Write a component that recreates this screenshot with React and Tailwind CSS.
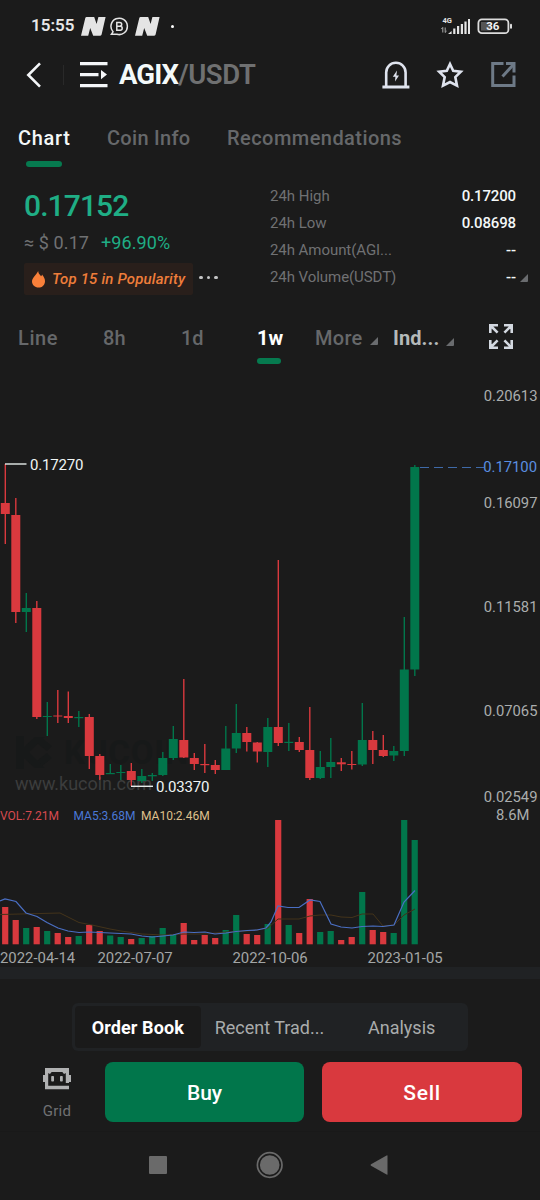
import { clsx } from "clsx";

const UP = "#01764b";
const DOWN = "#d9393e";

// [up, high, bodyTop, bodyBottom, low, volumeTop]
const candles = [
  [0, 464, 503, 514, 544, 907],
  [0, 498, 515, 612, 623, 920],
  [1, 593, 608, 612, 632, 928],
  [0, 601, 608, 717, 719, 927],
  [1, 702, 716, 717, 736, 931],
  [0, 690, 715.5, 716.5, 723, 933],
  [0, 691.5, 716, 718, 723, 937],
  [1, 711, 717, 718.2, 727, 936],
  [0, 714, 717, 756, 769, 925],
  [0, 754, 756, 775, 780, 931],
  [1, 764, 773, 774.2, 774, 935.5],
  [1, 765, 772, 773, 780, 937],
  [0, 763, 771, 780, 786, 939],
  [1, 769, 776, 781, 783, 938],
  [1, 773, 775, 776.3, 781, 936],
  [1, 752, 758, 775, 776, 928],
  [1, 726, 739, 758, 760, 934],
  [0, 679, 740, 757.5, 758, 923],
  [0, 753, 758, 764, 770, 940],
  [0, 744, 764, 765.2, 773, 935],
  [0, 760, 765, 770, 774, 938],
  [1, 726, 748.5, 770, 770, 930],
  [1, 704, 733, 748.5, 753, 915],
  [0, 727, 733, 742, 751.5, 934],
  [0, 742, 742.5, 751.5, 762.5, 935],
  [1, 718, 727, 752, 767, 924],
  [0, 560, 727, 743, 746, 820],
  [1, 723, 741.8, 743, 751, 925],
  [0, 737, 742, 750, 752, 933],
  [0, 707, 750, 778, 780, 899],
  [1, 751, 767, 778, 779, 932],
  [1, 738, 762, 767, 778, 931],
  [0, 758, 762.3, 764.3, 771, 940],
  [0, 751, 764, 765, 769.5, 937],
  [1, 703, 740, 764.5, 766, 892],
  [0, 731, 740, 750, 764, 930],
  [0, 735, 750, 756, 757, 932],
  [1, 746, 751, 755.5, 761, 933],
  [1, 617, 669.5, 751, 756, 820],
  [1, 465, 467, 669.5, 676, 840],
];

const ma5 =
  "0,901 5,899 16,901.5 26,913 37,916.5 47,922.5 58,928 68,931 79,932.5 89,932 100,932.5 110,933 121,933.5 131,934 142,936 152,937 163,936 173,935 184,932 194,932.5 205,932 215,934 226,933 236,931.5 247,930.5 257,930 266,928 271,922 278,906 288,907.5 299,907.5 310,900 320,901.5 331,924 341,927 352,928 362,926.5 373,926 383,926.5 394,925 404,902 415,890.5";
const ma10 =
  "0,914.5 20,914 60,913 68,917 79,922.5 92,925 110,929 121,931 142,934 163,935 184,934 205,934 226,932 247,931 257,930 268,928 278,919 299,919 310,916 320,915 331,915 341,917 352,917.5 362,914 373,914 383,926 394,925 404,915 415,909";

const priceScale = [
  ["0.20613", 401],
  ["0.16097", 507.7],
  ["0.11581", 612],
  ["0.07065", 716.3],
  ["0.02549", 801.7],
];

const stats = [
  ["24h High", "0.17200"],
  ["24h Low", "0.08698"],
  ["24h Amount(AGI...", "--"],
  ["24h Volume(USDT)", "--"],
];

const NIcon = () => (
  <svg width="25" height="19" viewBox="0 0 25 19" fill="#e4e4e4">
    <path d="M4.3 1 Q4.6 0 5.6 0 H13.2 L15.6 7 L17.4 0 H24.6 L20.6 17.6 Q20.4 18.7 19.2 18.7 H12.2 L9.2 11 L7.2 18.7 H0 Z" />
  </svg>
);

function StatusBar() {
  return (
    <div className="flex h-[52px] items-center pl-[31px]">
      <span className="w-[50px] text-[17px] font-semibold text-[#e8e8e8]">
        15:55
      </span>
      <NIcon />
      <svg className="ml-[4px]" width="19" height="19" viewBox="0 0 19 19" fill="none" stroke="#e4e4e4" strokeWidth="1.5">
        <path d="M3 14.8 A8.2 8.2 0 1 1 7 17.3 H1.4 Z" />
        <path d="M6.8 5.4 H9.8 A1.9 1.9 0 0 1 9.8 9.2 H6.8 Z M6.8 9.2 H10.2 A2 2 0 0 1 10.2 13.2 H6.8 Z" />
      </svg>
      <span className="ml-[6px]">
        <NIcon />
      </span>
      <span className="ml-[11px] size-[3px] rounded-full bg-white" />
      <svg className="ml-[266px]" width="32" height="20" viewBox="0 0 32 20" fill="#e4e4e4">
        <text x="2.5" y="6.6" fontSize="7.5" fontWeight="700">4G</text>
        <path d="M2.8 11.5 V16.5 M1.4 13 L2.8 11.4 M5.2 11.5 V16.5 M5.2 16.4 L6.6 15" stroke="#bbb" strokeWidth=".9" />
        <path d="M8 18 L11.6 15 V18 Z M13.2 12.5 h2.2 v5.5 h-2.2 Z M17 10 h2.2 v8 h-2.2 Z M20.8 8 h2.2 v10 h-2.2 Z M24.4 5.5 h2.2 v12.5 h-2.2 Z M28 3 h2 v15 h-2 Z" />
      </svg>
      <svg className="ml-[5px]" width="36" height="17" viewBox="0 0 36 17">
        <rect x="1.4" y="1.4" width="30" height="13.8" rx="3.5" fill="none" stroke="#dcdcdc" strokeWidth="1.8" />
        <rect x="4" y="4" width="10" height="8.6" fill="#555" />
        <rect x="33" y="5.8" width="2" height="5" rx="1" fill="#dcdcdc" />
        <text x="15.8" y="12.4" textAnchor="middle" fontSize="11.5" fontWeight="700" fill="#f2f2f2">36</text>
      </svg>
    </div>
  );
}

function Header() {
  return (
    <div className="flex h-[45px] items-center pl-[25px]">
      <svg width="18" height="28" viewBox="0 0 18 28" fill="none" stroke="#f4f6f8" strokeWidth="2.6">
        <path d="M15 2.3 L3.3 14 L15 25.7" />
      </svg>
      <span className="ml-[20px] h-[20px] w-px bg-[#292929]" />
      <svg className="ml-[16px]" width="28" height="26" viewBox="0 0 28 26" fill="#f4f6f8">
        <path d="M0 0 H27.5 V3.2 H0 Z M0 11 H18.5 V14.2 H0 Z M0 22 H27.5 V25.2 H0 Z M21 8 L27 12.6 L21 17.2 Z" />
      </svg>
      <h1 className="ml-[11px] w-[263px] text-[27.5px] font-bold text-[#f4fafa]">
        <span className="tracking-[-0.9px]">AGIX</span>
        <span className="font-semibold tracking-[-0.4px] text-[#6f7071]">/USDT</span>
      </h1>
      <svg width="28" height="28" viewBox="0 0 28 28" fill="none" stroke="#dfe3ee" strokeWidth="2.6">
        <path d="M.4 26 H27.4" strokeWidth="3" />
        <path d="M4.2 25 V11.5 A9.7 9.7 0 0 1 23.6 11.5 V25" />
        <path d="M15 9.5 L10.8 15.8 H13.4 L13 20.5 L17 14.4 H14.4 Z" fill="#dfe3ee" stroke="none" />
      </svg>
      <svg className="ml-[26px]" width="28" height="28" viewBox="0 0 28 28" fill="none" stroke="#dfe3ee" strokeWidth="2.6">
        <path d="M14 3 L17.2 9.8 L24.8 10.8 L19.3 16.1 L21 24.6 L14 21 L7 24.6 L8.7 16.1 L3.2 10.8 L10.8 9.8 Z" />
      </svg>
      <svg className="ml-[26px]" width="27" height="27" viewBox="0 0 27 27" fill="none" stroke="#6e7a87" strokeWidth="3">
        <path d="M13.5 2.5 H2.7 V24.5 H24 V14.5" />
        <path d="M12.5 15.5 L23.5 3.5" />
        <path d="M16 2.5 H24 V11.5" />
      </svg>
    </div>
  );
}

function Tabs() {
  return (
    <div className="flex h-[78px] pl-[18px] pt-[28px] text-[20px] leading-[27px] font-medium text-[#66686a]">
      <div className="flex w-[89px] flex-col text-[#f4f8f8]">
        <span className="tracking-[0.7px]">Chart</span>
        <span className="mt-[9px] ml-[8px] h-[6px] w-[36px] rounded-full bg-[#067a4f]" />
      </div>
      <span className="w-[120px] tracking-[0.3px]">Coin Info</span>
      <span className="tracking-[0.45px]">Recommendations</span>
    </div>
  );
}

const Corner = ({ className }) => (
  <svg className={className} width="8" height="8" viewBox="0 0 8 8" fill="#6a6c6f">
    <path d="M8 0 V7 Q8 8 7 8 H0 Z" />
  </svg>
);

function Ticker() {
  return (
    <div className="flex h-[130px] pt-[7px]">
      <div className="w-[270px] pl-[24px]">
        <div className="h-[46px] text-[30px] leading-[48px] font-medium tracking-[-0.9px] text-[#1fae85]">
          0.17152
        </div>
        <div className="flex h-[27px] text-[18px] leading-[29px]">
          <span className="w-[77px] tracking-[0.1px] text-[#707173]">≈ $ 0.17</span>
          <span className="tracking-[0.1px] text-[#1fae85]">+96.90%</span>
        </div>
        <div className="mt-[8px] flex items-center">
          <div className="flex h-[32px] w-[169px] items-center rounded-xs bg-[#291f1b] pl-[8px]">
            <svg width="13" height="17" viewBox="0 0 13 17" fill="#f9803a">
              <path d="M6.2 0 C6.4 3.2 8.4 3.8 9 5.2 C9.8 4.6 10 4 10 3.4 C12 5.6 13 8 13 10.2 C13 14 10 16.6 6.5 16.6 C3 16.6 0 14 0 10.6 C0 6.8 4 4.6 6.2 0 Z" />
            </svg>
            <span className="ml-[7px] text-[15px] font-medium tracking-[0.17px] whitespace-nowrap text-[#ee7d3a] italic">
              Top 15 in Popularity
            </span>
          </div>
          <div className="-mt-[3px] ml-[6px] flex gap-[4px]">
            <i className="size-[3.5px] rounded-full bg-[#c4c5c6]" />
            <i className="size-[3.5px] rounded-full bg-[#c4c5c6]" />
            <i className="size-[3.5px] rounded-full bg-[#c4c5c6]" />
          </div>
        </div>
      </div>
      <div className="flex-1 pt-[1px] text-[15px] leading-[27px]">
        {stats.map(([label, value], i) => (
          <div key={label} className="flex h-[27px] items-center">
            <span
              className={clsx(
                "flex-1 text-[#707173]",
                i < 2 ? "tracking-[-0.02px]" : "tracking-[-0.06px]"
              )}
            >
              {label}
            </span>
            <span className="font-medium tracking-[-0.15px] text-[#f4f8f8]">{value}</span>
            <span className="flex w-[24px] pl-[4px]">{i === 3 && <Corner />}</span>
          </div>
        ))}
      </div>
    </div>
  );
}

function Intervals() {
  return (
    <div className="flex h-[60px] pt-[18px] pl-[18px] text-[20px] leading-[30px] font-medium text-[#66686a]">
      <span className="w-[85px] tracking-[0.6px]">Line</span>
      <span className="w-[78px] tracking-[0.2px]">8h</span>
      <span className="w-[76px]">1d</span>
      <div className="flex w-[58px] flex-col font-bold text-white">
        <span className="h-[35px]">1w</span>
        <span className="h-[6px] w-[24px] rounded-full bg-[#067a4f]" />
      </div>
      <span className="w-[55px] tracking-[0.3px]">More</span>
      <Corner className="mt-[14px]" />
      <span className="ml-[15px] w-[53px] font-bold tracking-[0.1px] text-[#b4b9b9]">Ind...</span>
      <Corner className="mt-[15px]" />
      <svg className="ml-[35px] mt-px" width="24" height="25" viewBox="0 0 24 25" fill="none" stroke="#d3d8e0" strokeWidth="2.6">
        <path d="M1.3 9 V1.3 H9 M1.5 1.5 L8.6 8.6 M15 1.3 H22.7 V9 M22.5 1.5 L15.4 8.6 M1.3 16 V23.7 H9 M1.5 23.5 L8.6 16.4 M15 23.7 H22.7 V16 M22.5 23.5 L15.4 16.4" />
      </svg>
    </div>
  );
}

function PriceChart() {
  return (
    <svg className="block" width="540" height="602" viewBox="0 365 540 602">
      {/* watermark */}
      <g fill="#171919">
        <path d="M16 736 h8 v11 l11 -10 h10 l-16 15 l16 16 h-10 l-11 -10 v11 h-8 Z M42 738 l10 8 l-5 5 l-9 -7 Z M42 766 l10 -8 l-5 -5 l-9 7 Z" />
        <text x="64" y="764" fontSize="33" fontWeight="700" textLength="124">KUCOIN</text>
      </g>
      <text x="15" y="790" fontSize="18" fill="#3c3d3d" textLength="137">www.kucoin.com</text>

      {candles.map(([up, high, top, bottom, low, vol], i) => {
        const x = 5.2 + i * 10.5;
        return (
          <g key={i} fill={up ? UP : DOWN}>
            <rect x={x - 0.6} y={high} width="1.4" height={low - high} />
            <rect x={x - 4.4} y={top} width="9" height={bottom - top} />
            <rect x={x - 3.1} y={vol} width="6.2" height={944.3 - vol} />
          </g>
        );
      })}

      <polyline points={ma10} fill="none" stroke="#43331a" strokeWidth="1" />
      <polyline points={ma5} fill="none" stroke="#4a6fc4" strokeWidth="1.2" />

      <g stroke="#e6ecea" strokeWidth="1.4">
        <path d="M5 464 H26.5" />
        <path d="M131 786.3 H153" />
      </g>
      <g fontSize="15" fill="#f0f5f4">
        <text x="30" y="469.5" textLength="53.5">0.17270</text>
        <text x="156" y="791.8" textLength="53.5">0.03370</text>
      </g>

      <path d="M420 467.5 H484" stroke="#3f6aa8" strokeWidth="1.1" strokeDasharray="9 5" />
      <text x="537" y="472" fontSize="14.8" fill="#5a8fe0" textAnchor="end">0.17100</text>
      <g fontSize="14.8" fill="#aaadad" textAnchor="end">
        {priceScale.map(([label, y]) => (
          <text key={label} x="537.5" y={y}>{label}</text>
        ))}
        <text x="529.5" y="819.7">8.6M</text>
      </g>

      <g fontSize="12">
        <text x="0" y="820" fill="#d64a4f">VOL:7.21M</text>
        <text x="73.5" y="820" fill="#4a78d6">MA5:3.68M</text>
        <text x="141" y="820" fill="#dfc08c">MA10:2.46M</text>
      </g>

      <g fontSize="14.9" fill="#a3a6a6">
        <text x="0" y="963">2022-04-14</text>
        <text x="97.5" y="963">2022-07-07</text>
        <text x="232.5" y="963">2022-10-06</text>
        <text x="367.5" y="963">2023-01-05</text>
      </g>
    </svg>
  );
}

function BookTabs() {
  const tabs = ["Order Book", "Recent Trad...", "Analysis"];
  return (
    <div className="mt-[24px] ml-[72px] flex h-[48px] w-[396px] rounded-md bg-[#202224] p-[3px] text-[18px]">
      {tabs.map((tab, i) => (
        <div
          key={tab}
          className={clsx(
            "flex items-center justify-center",
            i === 0 && "w-[126px] rounded-sm bg-[#1a1a1a] font-bold tracking-[0.1px] text-white",
            i === 1 && "w-[138px] text-[#a9acac]",
            i === 2 && "w-[127px] text-[#a9acac]"
          )}
        >
          {tab}
        </div>
      ))}
    </div>
  );
}

function Actions() {
  return (
    <div className="mt-[11px] flex h-[69px]">
      <div className="flex w-[105px] flex-col items-center pt-[6px] pl-[9px]">
        <svg width="28" height="22" viewBox="0 0 28 22" fill="#b0b1b2">
          <path fillRule="evenodd" d="M2 0 H26 V7 H28 V14 H26 V15 H22.8 V4 H5.2 V17.8 H26 V21.2 H2 V14 H0 V7 H2 Z" />
          <path d="M5 3 H9.5 L7 6 L5 5 Z M23 3 H18.5 L21 6 L23 5 Z" />
          <rect x="8.2" y="8" width="2.8" height="5.6" rx=".8" />
          <rect x="17" y="8" width="2.8" height="5.6" rx=".8" />
        </svg>
        <span className="mt-[10px] text-[15px] leading-[22px] tracking-[0.3px] text-[#707173]">Grid</span>
      </div>
      <button className="h-[60px] w-[199px] rounded-lg bg-[#01764b] pt-[3px] text-[21px] font-medium text-white">
        Buy
      </button>
      <button className="ml-[18px] h-[60px] w-[200px] rounded-lg bg-[#d9393e] pt-[3px] text-[21px] font-medium tracking-[0.7px] text-white">
        Sell
      </button>
    </div>
  );
}

function NavBar() {
  return (
    <div className="flex h-[66px] items-center border-t border-[#191919] pl-[149px]">
      <span className="size-[18px] rounded-[1px] bg-[#6a6a6a]" />
      <svg className="ml-[89px]" width="28" height="28" viewBox="0 0 28 28">
        <circle cx="13.7" cy="14" r="12.3" fill="none" stroke="#6a6a6a" strokeWidth="1.7" />
        <circle cx="13.7" cy="14" r="9.8" fill="#6a6a6a" />
      </svg>
      <svg className="ml-[86px]" width="18" height="20" viewBox="0 0 18 20" fill="#6a6a6a">
        <path d="M17.5 .8 V19.2 Q17.5 20 16.6 19.6 L1 10.7 Q0 10 1 9.3 L16.6 .4 Q17.5 0 17.5 .8 Z" />
      </svg>
    </div>
  );
}

export default function App() {
  return (
    <div className="h-[1200px] w-[540px] overflow-hidden bg-[#1b1b1b] font-['Roboto',sans-serif]">
      <StatusBar />
      <Header />
      <Tabs />
      <Ticker />
      <Intervals />
      <PriceChart />
      <div className="h-[12px] bg-[#202224]" />
      <BookTabs />
      <Actions />
      <NavBar />
    </div>
  );
}
